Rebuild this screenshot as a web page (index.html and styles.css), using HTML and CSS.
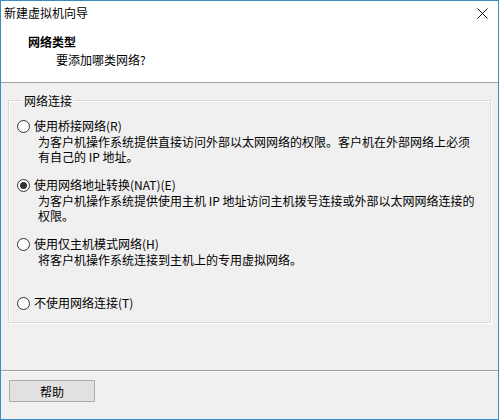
FILE: index.html
```html
<!DOCTYPE html>
<html lang="zh-CN">
<head>
    <meta charset="UTF-8">
    <meta name="viewport" content="width=device-width, initial-scale=1.0">
    <title>新建虚拟机向导</title>
    <link rel="stylesheet" href="styles.css">
</head>
<body>
    <div class="janela">
        <div class="topo">
            <div class="barra-titulo">
                <span class="titulo">新建虚拟机向导</span>
                <svg class="fechar" width="12" height="12" viewBox="0 0 12 12">
                    <path d="M0.5 0.5 L11.5 11.5 M11.5 0.5 L0.5 11.5" stroke="#000" stroke-width="1" fill="none"/>
                </svg>
            </div>
            <div class="cabecalho">
                <div class="cab-titulo">网络类型</div>
                <div class="cab-sub">要添加哪类网络?</div>
            </div>
        </div>

        <div class="conteudo">
            <fieldset class="grupo">
                <legend>网络连接</legend>

                <div class="opcao">
                    <div class="rotulo"><span class="radio"></span>使用桥接网络(R)</div>
                    <div class="descricao">为客户机操作系统提供直接访问外部以太网网络的权限。客户机在外部网络上必须<br>有自己的 IP 地址。</div>
                </div>

                <div class="opcao">
                    <div class="rotulo"><span class="radio marcado"></span>使用网络地址转换(NAT)(E)</div>
                    <div class="descricao">为客户机操作系统提供使用主机 IP 地址访问主机拨号连接或外部以太网网络连接的<br>权限。</div>
                </div>

                <div class="opcao">
                    <div class="rotulo"><span class="radio"></span>使用仅主机模式网络(H)</div>
                    <div class="descricao">将客户机操作系统连接到主机上的专用虚拟网络。<br>&nbsp;</div>
                </div>

                <div class="opcao ultima">
                    <div class="rotulo"><span class="radio"></span>不使用网络连接(T)</div>
                </div>
            </fieldset>
        </div>

        <div class="rodape">
            <button class="botao">帮助</button>
        </div>
    </div>
</body>
</html>
```

FILE: styles.css
```css
body {
    margin: 0;
    font-family: "Noto Sans CJK SC", "Noto Sans", sans-serif;
    font-size: 12px;
    color: #000;
    background: #f0f0f0;
}
.janela {
    width: 499px;
    height: 420px;
    box-sizing: border-box;
    border: 1px solid #3a8cc4;
    background: #f0f0f0;
    display: flex;
    flex-direction: column;
}
.topo {
    background: #fff;
    border-bottom: 1px solid #a0a0a0;
}
.barra-titulo {
    display: flex;
    align-items: center;
    justify-content: space-between;
    height: 24px;
    padding: 0 10px 0 3px;
    line-height: 16px;
}
.fechar {
    display: block;
    width: 11px;
    height: 11px;
}
.cabecalho {
    padding: 9px 0 14px 27px;
    line-height: 16px;
}
.cab-titulo {
    font-weight: bold;
}
.cab-sub {
    margin-top: 2px;
    padding-left: 28px;
}
.conteudo {
    flex: 1;
    padding: 10px 7px 0 7px;
}
.grupo {
    margin: 0;
    padding: 10px 8px 11px 8px;
    border: 1px solid #dcdcdc;
    box-shadow: inset 1px 1px 0 #fff, 1px 1px 0 #fff;
}
.grupo legend {
    padding: 0 2px;
    margin-left: 5px;
    line-height: 15px;
}
.opcao {
    margin-bottom: 13px;
}
.opcao.ultima {
    margin-bottom: 0;
}
.rotulo {
    display: flex;
    align-items: center;
    height: 16px;
    line-height: 16px;
    white-space: nowrap;
}
.radio {
    width: 13px;
    height: 13px;
    box-sizing: border-box;
    border: 1px solid #333;
    border-radius: 50%;
    background: #fff;
    margin-right: 4px;
    display: flex;
    align-items: center;
    justify-content: center;
}
.radio.marcado::after {
    content: "";
    width: 7px;
    height: 7px;
    border-radius: 50%;
    background: #333;
}
.descricao {
    padding-left: 21px;
    line-height: 15px;
    white-space: nowrap;
}
.rodape {
    height: 39px;
    border-top: 1px solid #a0a0a0;
    box-shadow: inset 0 1px 0 #fff;
    padding: 9px 0 0 8px;
    box-sizing: content-box;
}
.botao {
    display: block;
    width: 86px;
    height: 22px;
    padding: 0;
    background: #e1e1e1;
    border: 1px solid #adadad;
    font-family: inherit;
    font-size: 12px;
    color: #000;
}
```
